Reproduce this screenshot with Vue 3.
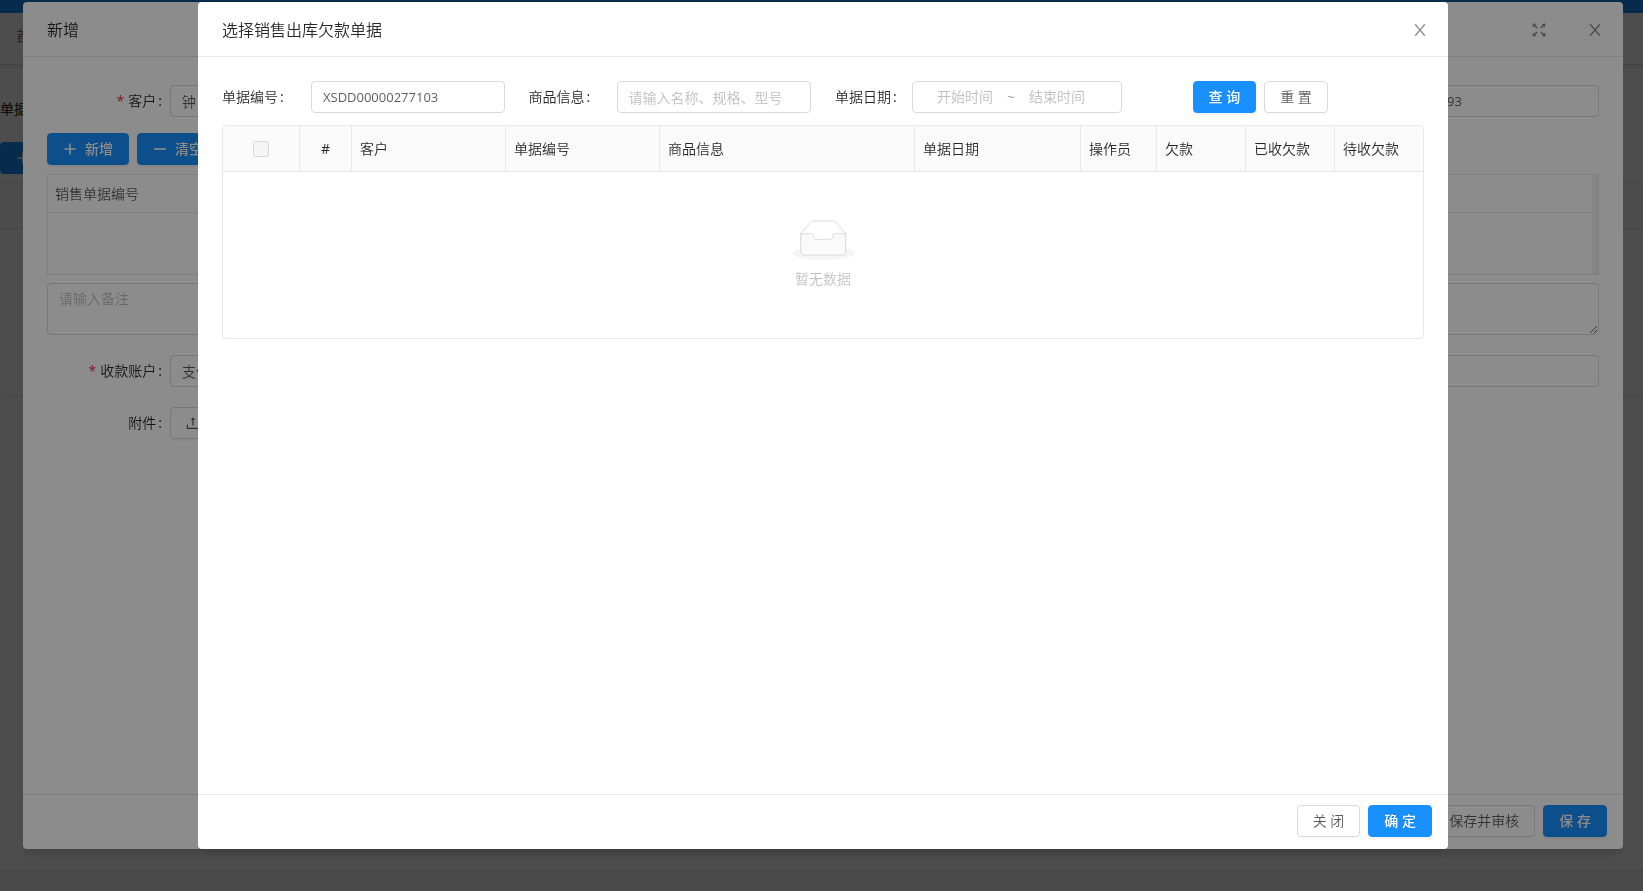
<script setup>
import { ref } from 'vue'

const columns = ['客户', '单据编号', '商品信息', '单据日期', '操作员', '欠款', '已收欠款', '待收欠款']
const docNo = ref('XSDD00000277103')
const goods = ref('')
const start = ref('')
const end = ref('')
const customer = ref('钟')
const receiptNo = ref('93')
const account = ref('支付宝')
const remark = ref('')
</script>

<template>
  <div class="app">
    <div class="page">
      <header class="topbar"></header>
      <nav class="tabs"><a href="#" class="tab">首页</a></nav>
      <main class="card">
        <div class="page-label">单据编号</div>
        <button type="button" class="btn primary page-btn">
          <svg class="icon" viewBox="0 0 14 14"><path d="M6 1.5h1.8v11H6zM1.5 6.2h11v1.6h-11z" /></svg>
          <span>新增</span>
        </button>
        <div class="page-table"><div class="page-thead"></div></div>
      </main>
    </div>

    <div class="mask">
      <section class="modal outer" role="dialog" aria-label="新增">
        <header class="modal-head">
          <h2>新增</h2>
          <button type="button" class="icon-btn" aria-label="全屏">
            <svg class="icon" viewBox="0 0 14 14">
              <path d="M.4.4 4.4.9 3.3 2.1 5.7 4.5 4.6 5.6 2.2 3.2 1 4.4zM13.6.4 13 4.4 11.8 3.2 9.4 5.6 8.3 4.5 10.7 2.1 9.6.9zM.4 13.6 1 9.6 2.2 10.8 4.6 8.4 5.7 9.5 3.3 11.9 4.4 13.1zM13.6 13.6 9.6 13.1 10.7 11.9 8.3 9.5 9.4 8.4 11.8 10.8 13 9.6z" />
            </svg>
          </button>
          <button type="button" class="icon-btn" aria-label="关闭">
            <svg class="close" viewBox="64 64 896 896"><path d="M563.8 512l262.5-312.9c4.4-5.2.7-13.1-6.1-13.1h-79.8c-4.7 0-9.2 2.1-12.3 5.7L511.6 449.8 295.1 191.7c-3-3.6-7.5-5.7-12.3-5.7H203c-6.8 0-10.5 7.9-6.1 13.1L459.4 512 196.9 824.9A7.95 7.95 0 0 0 203 838h79.8c4.7 0 9.2-2.1 12.3-5.7l216.5-258.1 216.5 258.1c3 3.6 7.5 5.7 12.3 5.7h79.8c6.8 0 10.5-7.9 6.1-13.1L563.8 512z" /></svg>
          </button>
        </header>
        <div class="modal-body outer-body">
          <div class="form-row">
            <label class="side-label required" for="customer">客户</label>
            <input id="customer" v-model="customer" class="input customer" />
            <input v-model="receiptNo" class="input code receipt" aria-label="单据编号" />
          </div>
          <div class="actions">
            <button type="button" class="btn primary">
              <svg class="icon" viewBox="0 0 14 14"><path d="M6.2 1.5h1.6v11H6.2zM1.5 6.2h11v1.6h-11z" /></svg>
              <span>新增</span>
            </button>
            <button type="button" class="btn primary">
              <svg class="icon" viewBox="0 0 14 14"><path d="M1 6.2h12v1.6H1z" /></svg>
              <span>清空</span>
            </button>
          </div>
          <div class="bill-box">
            <table class="bill-table">
              <thead><tr><th scope="col">销售单据编号</th></tr></thead>
              <tbody><tr><td></td></tr></tbody>
            </table>
            <div class="gutter"></div>
          </div>
          <textarea v-model="remark" class="input remark" placeholder="请输入备注" aria-label="备注"></textarea>
          <div class="form-row">
            <label class="side-label required" for="account">收款账户</label>
            <input id="account" v-model="account" class="input account" />
          </div>
          <div class="form-row">
            <label class="side-label" for="attach">附件</label>
            <button id="attach" type="button" class="btn">
              <svg class="icon" viewBox="0 0 14 14"><path d="M7 1.2 9.2 4H7.6v5.4H6.4V4H4.8zM.8 8.8H2v3h10v-3h1.2V13H.8z" /></svg>
              <span>上传</span>
            </button>
          </div>
        </div>
        <footer class="modal-foot">
          <button type="button" class="btn">保存并审核</button>
          <button type="button" class="btn primary">保 存</button>
        </footer>
      </section>
    </div>

    <div class="mask">
      <section class="modal inner" role="dialog" aria-label="选择销售出库欠款单据">
        <header class="modal-head">
          <h2>选择销售出库欠款单据</h2>
          <button type="button" class="icon-btn" aria-label="关闭">
            <svg class="close" viewBox="64 64 896 896"><path d="M563.8 512l262.5-312.9c4.4-5.2.7-13.1-6.1-13.1h-79.8c-4.7 0-9.2 2.1-12.3 5.7L511.6 449.8 295.1 191.7c-3-3.6-7.5-5.7-12.3-5.7H203c-6.8 0-10.5 7.9-6.1 13.1L459.4 512 196.9 824.9A7.95 7.95 0 0 0 203 838h79.8c4.7 0 9.2-2.1 12.3-5.7l216.5-258.1 216.5 258.1c3 3.6 7.5 5.7 12.3 5.7h79.8c6.8 0 10.5-7.9 6.1-13.1L563.8 512z" /></svg>
          </button>
        </header>
        <div class="modal-body">
          <form class="search" @submit.prevent>
            <div class="field">
              <label for="docno">单据编号</label>
              <input id="docno" v-model="docNo" class="input code" />
            </div>
            <div class="field goods-field">
              <label for="goods">商品信息</label>
              <input id="goods" v-model="goods" class="input" placeholder="请输入名称、规格、型号" />
            </div>
            <div class="field date-field">
              <label for="start">单据日期</label>
              <div class="input range">
                <input id="start" v-model="start" placeholder="开始时间" />
                <span>~</span>
                <input v-model="end" placeholder="结束时间" aria-label="结束时间" />
              </div>
            </div>
            <div class="buttons">
              <button type="submit" class="btn primary">查 询</button>
              <button type="reset" class="btn">重 置</button>
            </div>
          </form>
          <div class="table-box">
            <table class="grid-table">
              <colgroup>
                <col class="w77" /><col class="w52" /><col class="w154" /><col class="w154" /><col class="w255" />
                <col class="w166" /><col class="w76" /><col class="w89" /><col class="w89" /><col class="w88" />
              </colgroup>
              <thead>
                <tr>
                  <th scope="col" class="center"><input type="checkbox" class="check" disabled aria-label="全选" /></th>
                  <th scope="col" class="center index">#</th>
                  <th v-for="c in columns" :key="c" scope="col">{{ c }}</th>
                </tr>
              </thead>
              <tbody>
                <tr>
                  <td colspan="10">
                    <div class="empty">
                      <svg class="empty-art" viewBox="0 0 64 41">
                        <g transform="translate(0 1)" fill="none" fill-rule="evenodd">
                          <ellipse fill="#f5f5f5" cx="32" cy="33" rx="32" ry="7" />
                          <g stroke="#d9d9d9" fill-rule="nonzero">
                            <path d="M55 12.76L44.854 1.258C44.367.474 43.656 0 42.907 0H21.093c-.749 0-1.46.474-1.947 1.257L9 12.761V22h46v-9.24z" />
                            <path d="M41.613 15.931c0-1.605.994-2.93 2.227-2.931H55v18.137C55 33.26 53.68 35 52.05 35h-40.1C10.32 35 9 33.259 9 31.137V13h11.16c1.233 0 2.227 1.323 2.227 2.928v.022c0 1.605 1.005 2.901 2.237 2.901h14.752c1.232 0 2.237-1.308 2.237-2.913v-.007z" fill="#fafafa" />
                          </g>
                        </g>
                      </svg>
                      <p>暂无数据</p>
                    </div>
                  </td>
                </tr>
              </tbody>
            </table>
          </div>
        </div>
        <footer class="modal-foot">
          <button type="button" class="btn">关 闭</button>
          <button type="button" class="btn primary">确 定</button>
        </footer>
      </section>
    </div>
  </div>
</template>

<style>
html, body { overflow: hidden; }
</style>

<style scoped>
.app, .app * { box-sizing: border-box; }
.app {
  font-family: "Open Sans", "Noto Sans CJK SC", sans-serif;
  font-size: 14px;
  line-height: 22px;
  color: rgba(0, 0, 0, 0.65);
  font-weight: 350;
}

/* underlying page */
.page { height: 100vh; display: flex; flex-direction: column; background: #f0f2f5; padding-bottom: 22px; }
.topbar { height: 13px; background: #1890ff; flex: none; }
.tabs { height: 52px; flex: none; background: #fff; border-bottom: 1px solid #d9d9d9; padding: 12px 16px; margin-bottom: 4px; }
.tab { color: inherit; text-decoration: none; }
.card { flex: 1; background: #fff; padding-top: 29px; }
.page-label { color: #000; margin-bottom: 22px; }
.page-btn { margin-bottom: 8px; }
.page-table { height: 214px; border: 1px solid #e8e8e8; border-width: 1px 0; border-radius: 4px; }
.page-thead { height: 46px; background: #fafafa; border-bottom: 1px solid #e8e8e8; }

/* dialogs */
.mask {
  position: fixed;
  inset: 0;
  background: rgba(0, 0, 0, 0.45);
  padding: 2px 0 42px 3px;
  display: flex;
  justify-content: center;
}
.modal {
  display: flex;
  flex-direction: column;
  max-width: 100%;
  background: #fff;
  border-radius: 4px;
  box-shadow: 0 4px 12px rgba(0, 0, 0, 0.15);
  clip-path: inset(0 0 -20px 0);
}
.outer { width: 1600px; }
.inner { width: 1250px; }
.modal-head { display: flex; align-items: center; height: 55px; flex: none; padding: 2px 0 0 24px; border-bottom: 1px solid #e8e8e8; }
h2 { margin: 0; flex: 1; font-size: 16px; font-weight: 350; color: rgba(0, 0, 0, 0.85); }
.icon-btn { width: 56px; height: 52px; padding: 0; border: 0; background: none; display: flex; align-items: center; justify-content: center; color: rgba(0, 0, 0, 0.45); }
.icon { width: 14px; height: 14px; fill: currentColor; flex: none; }
.close { width: 16px; height: 16px; fill: currentColor; }
.modal-body { flex: 1; min-height: 0; padding: 24px; }
.modal-foot { display: flex; justify-content: flex-end; gap: 8px; flex: none; height: 55px; padding: 10px 16px; border-top: 1px solid #e8e8e8; }

.btn {
  display: inline-flex;
  align-items: center;
  gap: 8px;
  height: 32px;
  padding: 0 15px;
  border: 1px solid #d9d9d9;
  border-radius: 4px;
  background: #fff;
  color: rgba(0, 0, 0, 0.65);
  font: inherit;
  white-space: nowrap;
  box-shadow: 0 2px 0 rgba(0, 0, 0, 0.015);
}
.primary {
  border-color: #1890ff;
  background: #1890ff;
  color: #fff;
  font-weight: 500;
  text-shadow: 0 -1px 0 rgba(0, 0, 0, 0.12);
  box-shadow: 0 2px 0 rgba(0, 0, 0, 0.045);
}
.input {
  height: 32px;
  min-width: 0;
  margin: 0;
  padding: 4px 11px;
  border: 1px solid #d9d9d9;
  border-radius: 4px;
  background: #fff;
  font: inherit;
  color: rgba(0, 0, 0, 0.65);
  outline: none;
}
.code { font-size: 13px; font-weight: 400; }
::placeholder { color: #bfbfbf; opacity: 1; }

/* outer form */
.outer-body { display: flex; flex-direction: column; padding-top: 28px; }
.form-row { display: flex; align-items: center; margin-bottom: 20px; }
.form-row:first-child { margin-bottom: 16px; }
.side-label { width: 123px; flex: none; padding-right: 8px; text-align: right; color: rgba(0, 0, 0, 0.85); }
.side-label::after, .field label::after { content: ":"; margin-left: 2px; font-weight: 400; }
.required::before { content: "*"; margin-right: 4px; color: #f5222d; font-weight: 400; }
.customer { width: 380px; }
.receipt { width: 380px; margin-left: auto; padding-left: 227px; }
.account { flex: 1; }
.actions { display: flex; gap: 8px; margin-bottom: 9px; }
.bill-box { display: flex; border: 1px solid #e8e8e8; margin-bottom: 8px; }
.bill-table { flex: 1; border-collapse: separate; border-spacing: 0; }
.bill-table th { height: 38px; padding: 0 7px; text-align: left; font-weight: inherit; border-bottom: 1px solid #e8e8e8; }
.bill-table td { height: 61px; padding: 0; }
.gutter { width: 6px; background: #f0f0f0; }
.remark { height: 52px; margin-bottom: 20px; resize: vertical; display: block; width: 100%; }

/* search form */
.search { display: grid; grid-template-columns: repeat(4, minmax(0, 1fr)); column-gap: 24px; margin-bottom: 12px; }
.field { display: flex; align-items: center; }
.field label { width: 89px; flex: none; color: rgba(0, 0, 0, 0.85); }
.goods-field label { width: 88px; }
.field > .input { flex: 1; }
.date-field label { width: 77px; }
.field > .range { display: flex; flex: none; width: 210px; padding-right: 23px; align-items: center; }
.range input { flex: 1; min-width: 0; padding: 0; border: 0; background: none; font: inherit; text-align: center; outline: none; }
.range span { width: 10px; text-align: center; }
.buttons { display: flex; gap: 8px; padding-left: 51px; }

.table-box { border: 1px solid #e8e8e8; border-radius: 4px; overflow: hidden; }
.grid-table { width: 100%; table-layout: fixed; border-collapse: separate; border-spacing: 0; }
.grid-table th {
  height: 46px;
  padding: 0 8px;
  background: #fafafa;
  border-right: 1px solid #e8e8e8;
  border-bottom: 1px solid #e8e8e8;
  text-align: left;
  font-weight: inherit;
  color: rgba(0, 0, 0, 0.85);
}
.grid-table th:last-child { border-right: 0; }
.grid-table .center { text-align: center; }
.grid-table .index { font-weight: 400; }
.grid-table td { padding: 16px; }
.w77 { width: 77px; }
.w52 { width: 52px; }
.w154 { width: 154px; }
.w255 { width: 255px; }
.w166 { width: 166px; }
.w76 { width: 76px; }
.w89 { width: 89px; }
.w88 { width: 88px; }
.check { appearance: none; display: block; width: 16px; height: 16px; margin: 0 auto; border: 1px solid #d9d9d9; border-radius: 2px; background: #f5f5f5; }
.empty { display: flex; flex-direction: column; align-items: center; margin: 32px 0; gap: 8px; color: rgba(0, 0, 0, 0.25); }
.empty-art { height: 40px; }
.empty p { margin: 0; }
</style>
